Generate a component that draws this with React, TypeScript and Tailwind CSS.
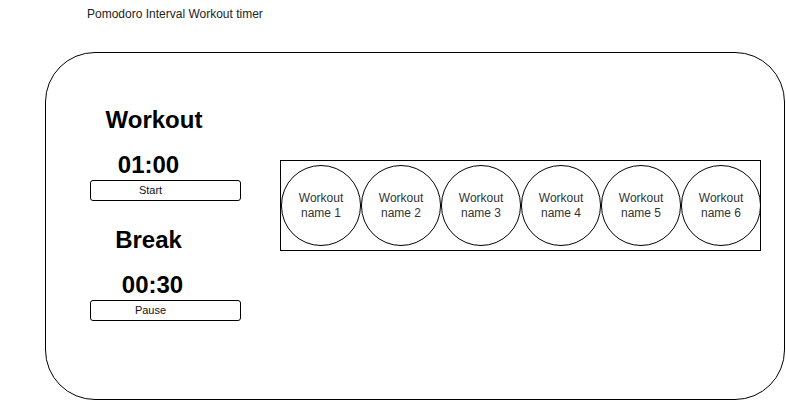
export default function App() {
  const workouts = [1, 2, 3, 4, 5, 6]

  return (
    <div className="w-[786px] h-[401px] bg-white overflow-hidden font-['Liberation_Sans',Arial,sans-serif]">
      {/* Title */}
      <p className="pl-[87px] pt-[7px] text-[12px] leading-[14px] text-[#222]">
        Pomodoro Interval Workout timer
      </p>

      {/* Main card */}
      <div className="mt-[31px] ml-[45px] w-[740px] h-[348px] border border-black rounded-[50px] flex">
        {/* Timers */}
        <div className="ml-[44px] mt-[53px] flex flex-col w-[151px]">
          <h1 className="w-[128px] text-center text-[24px] leading-[28px] font-bold text-black">Workout</h1>
          <div className="mt-[17px] w-[117px] text-center text-[24px] leading-[28px] font-bold text-black">01:00</div>
          <button className="mt-[1px] h-[21px] w-[151px] border border-black rounded-[3px] pr-[30px] text-[11px] leading-[13px] text-[#111]">
            Start
          </button>
          <h2 className="mt-[25px] w-[117px] text-center text-[24px] leading-[28px] font-bold text-black">Break</h2>
          <div className="mt-[17px] w-[125px] text-center text-[24px] leading-[28px] font-bold text-black">00:30</div>
          <button className="mt-[1px] h-[21px] w-[151px] border border-black rounded-[3px] pr-[30px] text-[11px] leading-[13px] text-[#111]">
            Pause
          </button>
        </div>

        {/* Workout list */}
        <div className="ml-[39px] mt-[107px] w-[481px] h-[91px] border border-black flex items-center">
          {workouts.map((n) => (
            <div
              key={n}
              className="w-[80px] h-[81px] shrink-0 rounded-full border border-black flex flex-col items-center justify-center text-[12px] leading-[15px] text-[#333]"
            >
              <span>Workout</span>
              <span>name {n}</span>
            </div>
          ))}
        </div>
      </div>
    </div>
  )
}
